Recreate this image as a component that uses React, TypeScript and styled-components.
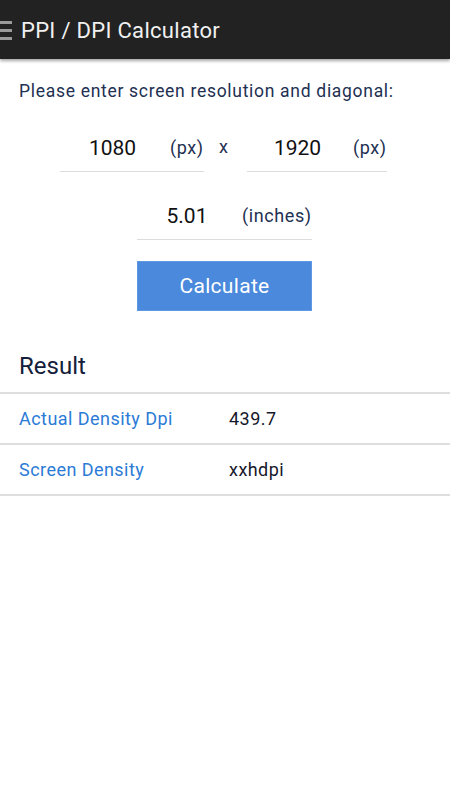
import styled, { createGlobalStyle } from 'styled-components'

const Global = createGlobalStyle`
    body {
        margin: 0;
        background: #fff;
        font-family: Roboto, "Liberation Sans", sans-serif;
    }
`

const Page = styled.div`
    width: 450px;
    min-height: 800px;
    background: #fff;
`

const Toolbar = styled.header`
    height: 59px;
    background: #222222;
    display: flex;
    align-items: center;
    box-shadow: 0 2px 3px rgba(0, 0, 0, 0.35);
    position: relative;
    padding-top: 2px;
    box-sizing: border-box;
`

const Burger = styled.div`
    width: 12px;
    display: flex;
    flex-direction: column;
    gap: 5px;
    margin-right: 9px;

    span {
        height: 3px;
        background: #9a9a9a;
    }
`

const Title = styled.h1`
    margin: 0;
    font-size: 22px;
    font-weight: 400;
    letter-spacing: 0.3px;
    color: #f0f0f0;
`

const Content = styled.main`
    padding: 20px 0 0;
`

const Intro = styled.p`
    margin: 0 0 0 19px;
    font-size: 17.5px;
    letter-spacing: 0.7px;
    color: #223052;
    line-height: 24px;
`

const InputRow = styled.div<{ $left: number; $top: number }>`
    display: flex;
    align-items: flex-end;
    margin-left: ${p => p.$left}px;
    margin-top: ${p => p.$top}px;
`

const Field = styled.div<{ $width: number; $valueWidth: number }>`
    width: ${p => p.$width}px;
    display: flex;
    align-items: center;
    height: 46px;
    border-bottom: 1px solid #dcdcdc;
    box-sizing: border-box;
    padding-bottom: 2px;

    .value {
        width: ${p => p.$valueWidth}px;
        text-align: center;
        font-size: 21px;
        color: #111;
    }

    .unit {
        margin-left: 5px;
        font-size: 18px;
        letter-spacing: 0.6px;
        color: #223052;
    }
`

const Times = styled.div`
    width: 43px;
    text-align: center;
    font-size: 18px;
    color: #223052;
    padding-bottom: 6px;
    padding-right: 4px;
    box-sizing: border-box;
    align-self: center;
`

const Button = styled.button`
    display: block;
    margin: 21px 0 0 137px;
    width: 175px;
    height: 50px;
    background: #4a89dc;
    border: 1px solid #5e97e2;
    color: #fff;
    font-family: inherit;
    font-size: 21px;
    letter-spacing: 0.3px;
    padding: 0;
`

const ResultTitle = styled.h2`
    margin: 38px 0 0;
    padding: 0 19px 9px;
    font-size: 24px;
    font-weight: 400;
    color: #14203a;
    line-height: 34px;
    border-bottom: 2px solid #dedede;
`

const ResultRow = styled.div`
    display: flex;
    align-items: center;
    height: 51px;
    padding-left: 19px;
    border-bottom: 2px solid #dedede;
    box-sizing: border-box;
    font-size: 18px;
    letter-spacing: 0.45px;
`

const Label = styled.div`
    width: 210px;
    color: #2b7bd6;
`

const Value = styled.div`
    color: #15182a;
`

const results = [
    { label: 'Actual Density Dpi', value: '439.7' },
    { label: 'Screen Density', value: 'xxhdpi' },
]

export default function App() {
    return (
        <Page>
            <Global />

            <Toolbar>
                <Burger>
                    <span />
                    <span />
                    <span />
                </Burger>

                <Title>PPI / DPI Calculator</Title>
            </Toolbar>

            <Content>
                <Intro>Please enter screen resolution and diagonal:</Intro>

                <InputRow $left={60} $top={23}>
                    <Field $valueWidth={105} $width={144}>
                        <span className="value">1080</span>
                        <span className="unit">(px)</span>
                    </Field>

                    <Times>x</Times>

                    <Field $valueWidth={101} $width={140}>
                        <span className="value">1920</span>
                        <span className="unit">(px)</span>
                    </Field>
                </InputRow>

                <InputRow $left={137} $top={22}>
                    <Field $valueWidth={100} $width={175}>
                        <span className="value">5.01</span>
                        <span className="unit">(inches)</span>
                    </Field>
                </InputRow>

                <Button>Calculate</Button>

                <ResultTitle>Result</ResultTitle>

                {results.map(r => (
                    <ResultRow key={r.label}>
                        <Label>{r.label}</Label>
                        <Value>{r.value}</Value>
                    </ResultRow>
                ))}
            </Content>
        </Page>
    )
}
